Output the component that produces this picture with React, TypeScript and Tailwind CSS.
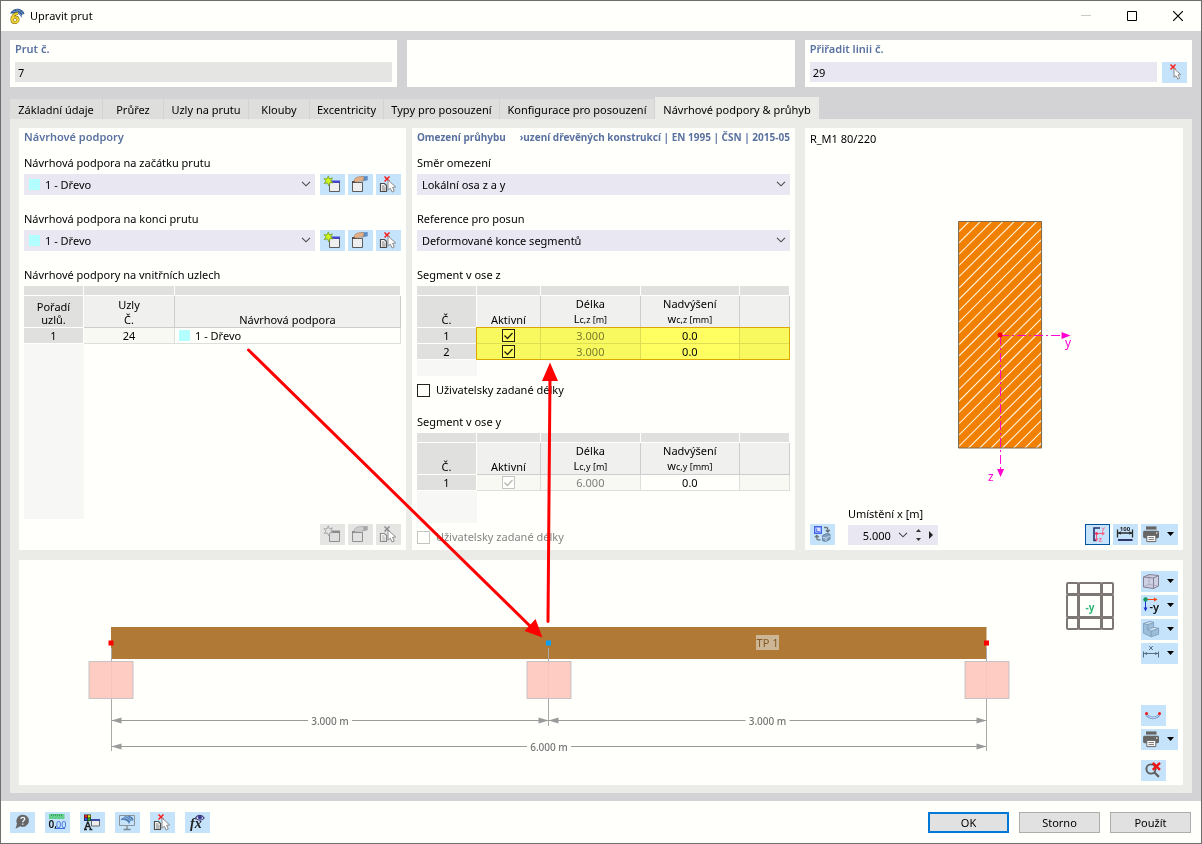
import { useState } from "react";
import type { ReactNode } from "react";
import clsx from "clsx";

const tabs = [
  { name: "Základní údaje", width: "w-[93px]" },
  { name: "Průřez", width: "w-[61px]" },
  { name: "Uzly na prutu", width: "w-[85px]" },
  { name: "Klouby", width: "w-[61px]" },
  { name: "Excentricity", width: "w-[74px]" },
  { name: "Typy pro posouzení", width: "w-[116px]" },
  { name: "Konfigurace pro posouzení", width: "w-[155px]" },
  { name: "Návrhové podpory & průhyb", width: "w-[164px]" },
];

/* ---------- icons, all drawn on the 25x21 button face ---------- */

const Face = ({ children }: { children: ReactNode }) => (
  <svg width="25" height="21" viewBox="0 0 25 21" fill="none" className="shrink-0">
    {children}
  </svg>
);

const Cursor = () => (
  <path d="M12 6v10.2l2.3-2 1.8 3.8 2.2-1-1.7-3.7 3.1-.3z" fill="#fff" stroke="#8b8b8b" />
);

const RedCross = () => <path d="M8.5 2.5l5 5m0-5l-5 5" stroke="#ff1e1e" strokeWidth="1.5" />;

const IconPick = () => (
  <Face>
    <RedCross />
    <path d="M12 6.5v8.8l2-1.6 1.8 3.5 1.9-.9-1.7-3.5 2.7-.3z" fill="#fff" stroke="#8b8b8b" />
  </Face>
);

const IconNew = ({ off }: { off?: boolean }) => (
  <Face>
    <path d="M9.5 7.5h10v10h-10z" fill={off ? "#dedede" : "#efefef"} stroke={off ? "#8f8f8f" : "#5c5c5c"} />
    <path d="M9 6.5h11v2.5H9z" fill={off ? "#8b8b8b" : "#4545c8"} />
    <path
      d="M8.3 1.8l1 3 3.2-.9-1.8 2.7 2.3 2.2-3.2-.1-1 3.1-1.4-3-3.2.8 1.9-2.6-2.2-2.2 3.2.1z"
      fill={off ? "#e6e6e6" : "#d6f51e"}
      stroke={off ? "#9b9b9b" : "#6da020"}
      strokeWidth=".8"
    />
  </Face>
);

const IconEdit = ({ off }: { off?: boolean }) => (
  <Face>
    <path d="M4.5 8.5h10v9h-10z" fill={off ? "#e2e2e2" : "#efefef"} stroke={off ? "#8f8f8f" : "#5c5c5c"} />
    <path d="M4 7h4v2H4z" fill={off ? "#8b8b8b" : "#4b4b4b"} />
    <path d="M13 2.6l6.7-.6v4.2l-5.8 1.4z" fill={off ? "#a6a6a6" : "#5c8dc6"} />
    <path
      d="M6 6c1.6-2.6 4-3.5 8-3.4l2 .6-.4 3-2.2 1.4-1.2-1-2.3 1.6-1.2-.8-1.6.8z"
      fill={off ? "#d0d0d0" : "#e2b088"}
      stroke={off ? "#9f9f9f" : "#a87a58"}
      strokeWidth=".6"
    />
  </Face>
);

const IconDelete = ({ off }: { off?: boolean }) => (
  <Face>
    <path d="M4.5 9.5h4l2 2v6h-6z" fill="#fff" stroke={off ? "#8b8b8b" : "#4d4d4d"} strokeWidth="1.2" />
    <path d="M6 12h2.5M6 14h3.5M6 16h3.5" stroke={off ? "#8b8b8b" : "#4d4d4d"} strokeWidth=".8" />
    {off ? <path d="M8.5 2.5l5 5m0-5l-5 5" stroke="#8b8b8b" strokeWidth="1.5" /> : <RedCross />}
    <Cursor />
  </Face>
);

const IconSwap = () => (
  <Face>
    <path d="M4.7 2.7h6.6v6.6H4.7z" fill="#dfe6ff" stroke="#4364e8" strokeWidth="1.4" />
    <path d="M6.7 4.5v3.2h3.2" stroke="#4364e8" />
    <path d="M14 3.5h2.2c1 0 1.6.6 1.6 1.6v2.2M15.8 6l2 2 2-2M6.8 11.5v2.8c0 1 .6 1.6 1.6 1.6h2M4.8 13.4l2-2 2 2" stroke="#6c7377" strokeWidth="1.3" />
    <path d="M12.5 11.5l4-2 3.5.6v5.2l-4 2.2-3.5-.7z" fill="#7f9dbd" stroke="#4f7092" strokeWidth=".7" />
    <path d="M12.5 13.5l3.5.5 4-2M16 14v3.3" stroke="#dbe8f4" strokeWidth=".8" />
  </Face>
);

const IconAxes = () => (
  <Face>
    <path d="M15 4H9v12.4h2" stroke="#25306a" strokeWidth="1.6" />
    <path d="M11.5 9.5h6M11.5 9.5v5.5" stroke="#ff5a80" />
    <path d="M17 7.6l3 1.9-3 1.9zM9.6 14.5l1.9 3.2 1.9-3.2z" fill="#ff5a80" />
    <path d="M17 3.5l1.3 2 1.3-2M18.3 5.5l-.8 2M14 14.5h2.6L14 17.2h2.8" stroke="#ff5a80" strokeWidth=".8" />
    <circle cx="11.5" cy="9.5" r="1.5" fill="#ff2f5c" />
  </Face>
);

const IconDimension = () => (
  <Face>
    <path d="M4.5 5.5v8M19.5 5.5v8M5 9h14" stroke="#2b2b2b" strokeWidth="1.3" />
    <path d="M5 9l2.8-1.7v3.4zM19 9l-2.8-1.7v3.4z" fill="#2b2b2b" />
    <path d="M5 15h14.5v2H5z" fill="#2f3568" />
    <text x="12" y="7" textAnchor="middle" fontSize="6" fontWeight="700" fill="#222">100</text>
  </Face>
);

const IconPrint = () => (
  <Face>
    <path d="M5 2.4h10.5v3.2H5z" fill="#666" />
    <path d="M3.5 6.8h13.1a1.4 1.4 0 0 1 1.4 1.4v4.6a1.4 1.4 0 0 1-1.4 1.4H3.5a1.4 1.4 0 0 1-1.4-1.4V8.2a1.4 1.4 0 0 1 1.4-1.4z" fill="#666" />
    <path d="M5.8 11.4h9v6.2h-9z" fill="#fff" stroke="#666" />
    <path d="M7.5 13.6H13M7.5 15.6H13" stroke="#666" strokeWidth=".9" />
    <circle cx="15.8" cy="9" r=".8" fill="#fff" />
  </Face>
);

const IconCube = () => (
  <Face>
    <path d="M2.5 6l5.5-2.5 9.5 1v10.5l-5 2.5-10-1.5z" fill="#cdd0e4" />
    <path d="M2.5 6l5.5-2.5 9.5 1-5 2.5zM2.5 6v10l10 1.5V7M17.5 4.5V15l-5 2.5" stroke="#857f93" />
    <path d="M8 3.5v10L2.5 16M8 13.5l9.5 1.5" stroke="#a39eb4" strokeWidth=".7" />
  </Face>
);

const IconMinusY = () => (
  <Face>
    <path d="M5 4.5h9" stroke="#ff4310" />
    <path d="M13 2.5l3.5 2-3.5 2z" fill="#ff4310" />
    <path d="M4.5 5v8" stroke="#1f35d8" />
    <path d="M2.5 12.5h4l-2 4z" fill="#1f35d8" />
    <circle cx="4.5" cy="4.5" r="2.2" fill="#129c62" />
    <text x="8.5" y="16" fontSize="11" fontWeight="600" fill="#111">-y</text>
  </Face>
);

const IconSolid = () => (
  <Face>
    <path d="M2.5 4.5l6.5-2.2 3.6 1v5l5 1v6l-7.4 2.5-7.7-3.6z" fill="#9dbedb" />
    <path d="M2.5 4.5l6.5-2.2 3.6 1-5.8 2.3zM6.8 10.8l5.8-2.5 5 1-7.4 2.7z" fill="#cfe3f3" />
    <path d="M2.5 4.5l6.5-2.2 3.6 1-5.8 2.3zM6.8 5.6v5.2l5.8-2.5v-5M6.8 10.8l3.4 1.2 7.4-2.7-5-1M10.2 12v5.8l7.4-2.5v-6M2.5 4.5v9.7l7.7 3.6" stroke="#7292b0" strokeWidth=".7" />
  </Face>
);

const IconMeasure = () => (
  <Face>
    <path d="M2.5 8.5v6M17.5 8.5v6M3 10.5h14" stroke="#566c80" />
    <path d="M3 10.5l3-1.6v3.2zM17 10.5l-3-1.6v3.2z" fill="#566c80" />
    <path d="M8.2 3l3.6 4m0-4L8.2 7" stroke="#566c80" />
  </Face>
);

const IconDeform = () => (
  <Face>
    <path d="M5.5 9c2.5 5.2 10.5 5.2 13 0" stroke="#7d9ccc" strokeWidth="2.6" />
    <path d="M5.5 9c2.5 5.2 10.5 5.2 13 0" stroke="#c9dcf4" strokeWidth=".9" />
    <circle cx="5.5" cy="8.6" r="1.5" fill="#f01818" />
    <circle cx="18.5" cy="8.6" r="1.5" fill="#f01818" />
  </Face>
);

const IconZoomReset = () => (
  <Face>
    <circle cx="10" cy="9" r="4.6" stroke="#5f5f5f" strokeWidth="1.9" />
    <path d="M13.3 12.3l4.6 4.6" stroke="#5f5f5f" strokeWidth="2.2" />
    <path d="M11.8 2.8l7.2 7m0-7l-7.2 7" stroke="#ee1616" strokeWidth="2.4" />
  </Face>
);

const IconHelp = () => (
  <Face>
    <path d="M12.8 2.8a6.3 6 0 1 1-2.6 11.5L5.5 16.8l1.5-5a6.3 6.3 0 0 1 5.8-9z" fill="#666" />
    <path d="M10.9 6.9c.2-2.2 4-2 3.8.2 0 1.3-2 1.5-2 3.2M12.7 11.5v1.3" stroke="#e9f4ff" strokeWidth="1.4" />
  </Face>
);

const IconUnits = () => (
  <Face>
    <path d="M4 2h15.5v5H4z" fill="#63cf8c" />
    <path d="M6.5 2v2M8.5 2v2M10.5 2v2M12.5 2v2M14.5 2v2M16.5 2v2" stroke="#2c9a58" strokeWidth=".8" />
    <text x="3.5" y="15.5" fontSize="10" fontWeight="600" fill="#111">0,</text>
    <text x="11" y="15.5" fontSize="9" fill="#3d6be0">00</text>
    <path d="M10.5 16.5H20" stroke="#3d6be0" />
  </Face>
);

const IconDisplay = () => (
  <Face>
    <path d="M4 2.5h7v6.5H4z" fill="#222" />
    <path d="M4.6 3.2h2.6v2.3H4.6z" fill="#ff2626" />
    <path d="M7.9 3.2h2.5v2.3H7.9z" fill="#e3e31a" />
    <path d="M4.6 6.1h2.6v2.3H4.6z" fill="#3a52f0" />
    <path d="M7.9 6.1h2.5v2.3H7.9z" fill="#21b330" />
    <path d="M7.8 9.5l-3 8M7.8 9.5l3 8M6 14.5h3.8M4 17.5h3M9.3 17.5h3" stroke="#222" strokeWidth="1.3" />
    <path d="M11.5 7.5h8v6.5h-8z" fill="#ececec" stroke="#6a6a6a" />
    <path d="M11 7h9v2h-9z" fill="#3e4ba6" />
  </Face>
);

const IconScreen = () => (
  <Face>
    <path d="M4.5 3.5h15v10h-15z" stroke="#8b9398" />
    <path d="M5.5 8.3c2-3.5 5.5-5 8.5-4.5 3 .5 4.5 2.5 4.5 4.7l-3 .3-1.5 3.5c-.5-3-3.5-5-8.5-4z" fill="#4f7db8" />
    <path d="M8 6c3-.5 6 1 7 3M11 4.5c3 .5 5 2 5.5 4" stroke="#b9d2ee" strokeWidth=".7" />
    <path d="M12 14v3M8.5 17.5h7" stroke="#7b858c" strokeWidth="1.3" />
  </Face>
);

const IconFormula = () => (
  <Face>
    <text x="5" y="15.5" fontSize="14" fontStyle="italic" fontWeight="700" fill="#222" className="font-['Liberation_Serif',serif]">fx</text>
    <path d="M10.5 6c2-3.5 6.5-3.5 8.7 0-2.2 3-6.7 3-8.7 0z" fill="#dfe1fb" stroke="#36366e" strokeWidth="1.1" />
    <circle cx="14.9" cy="5.6" r="2" fill="#3a3a92" />
  </Face>
);

const Chevron = ({ className }: { className?: string }) => (
  <svg width="10" height="6" viewBox="0 0 10 6" fill="none" className={className}>
    <path d="M1 .8l4 4 4-4" stroke="#4a4a4a" strokeWidth="1.1" />
  </svg>
);

/* ---------- controls ---------- */

type IconButtonProps = {
  label: string;
  children: ReactNode;
  menu?: boolean;
  disabled?: boolean;
  pressed?: boolean;
};

const IconButton = ({ label, children, menu, disabled, pressed }: IconButtonProps) => (
  <button
    type="button"
    aria-label={label}
    disabled={disabled}
    className={clsx(
      "flex h-[21px] shrink-0 items-center",
      menu ? "w-[37px]" : "w-[25px]",
      disabled ? "bg-[#e5e5e4]" : "bg-[#c5e3fa]",
      pressed && "outline outline-1 -outline-offset-1 outline-[#0054a0]"
    )}
  >
    {children}
    {menu && (
      <svg width="7" height="4" viewBox="0 0 7 4" className="mb-px ml-px">
        <path d="M0 0h7L3.5 4z" fill="#000" />
      </svg>
    )}
  </button>
);

type SelectProps = { id: string; label: string; value: string; swatch?: boolean; actions?: boolean };

const SelectField = ({ id, label, value, swatch, actions }: SelectProps) => (
  <>
    <label htmlFor={id} className="mb-[3px] block h-4 leading-4">{label}</label>
    <div className="mb-4 flex gap-[3px]">
      <div className={clsx("relative min-w-0 flex-1", actions && "mr-0.5")}>
        <select
          id={id}
          className={clsx("block h-[21px] w-full appearance-none bg-[#e8e7f2] pt-0.5", swatch ? "pl-[21px]" : "pl-[5px]")}
        >
          <option>{value}</option>
        </select>
        {swatch && <span className="pointer-events-none absolute top-[5px] left-[5px] size-[11px] bg-[#b3ffff]" />}
        <Chevron className="pointer-events-none absolute top-[7px] right-1" />
      </div>
      {actions && (
        <>
          <IconButton label="Nový"><IconNew /></IconButton>
          <IconButton label="Upravit"><IconEdit /></IconButton>
          <IconButton label="Odstranit"><IconDelete /></IconButton>
        </>
      )}
    </div>
  </>
);

type CheckProps = { id?: string; label?: string; initial?: boolean; disabled?: boolean };

const Check = ({ id, label, initial = false, disabled }: CheckProps) => {
  const [checked, setChecked] = useState(initial);
  return (
    <span className="relative block size-[13px] shrink-0">
      <input
        id={id}
        type="checkbox"
        aria-label={label}
        checked={checked}
        disabled={disabled}
        onChange={(e) => setChecked(e.target.checked)}
        className="block size-[13px] appearance-none border border-[#222] bg-[#fffffc] disabled:border-[#c4c4c4]"
      />
      {checked && (
        <svg viewBox="0 0 13 13" fill="none" className="pointer-events-none absolute inset-0">
          <path d="M2.5 6.5l3 3 5-5.5" stroke={disabled ? "#b5b5b5" : "#222"} strokeWidth="1.3" />
        </svg>
      )}
    </span>
  );
};

/* ---------- tables ---------- */

const strip = "h-2.5 border-r border-b border-[#fffffc] bg-[#e0e0df] p-0";
const headFirst = "h-8 border-r border-b border-[#fffffc] bg-[#e0e0df] p-0 pb-px align-bottom font-normal leading-[13px]";
const head = "h-8 border-r border-b border-[#cdcdcd] bg-[#f0f0ef] p-0 align-bottom font-normal leading-[15px]";
const rowHead = "h-4 border-r border-b border-[#fffffc] bg-[#e0e0df] p-0 font-normal leading-[15px]";
const cell = "h-4 border-r border-b border-[#dededc] p-0 text-center leading-[15px]";

type SegmentTableProps = { axis: string; lengths: string[]; disabled?: boolean; marked?: boolean };

const SegmentTable = ({ axis, lengths, disabled, marked }: SegmentTableProps) => (
  <div className="relative">
    <table className="w-full table-fixed border-separate border-spacing-0">
      <colgroup>
        <col className="w-[60px]" />
        <col className="w-16" />
        <col className="w-[100px]" />
        <col className="w-[99px]" />
        <col />
      </colgroup>
      <thead>
        <tr>
          {[0, 1, 2, 3, 4].map((i) => <td key={i} className={strip} />)}
        </tr>
        <tr>
          <th className={headFirst}>Č.</th>
          <th className={head}>Aktivní</th>
          <th className={head}>
            Délka<br />L<span className="text-[9px]">c,{axis} [m]</span>
          </th>
          <th className={head}>
            Nadvýšení<br />w<span className="text-[9px]">c,{axis} [mm]</span>
          </th>
          <th className={head} />
        </tr>
      </thead>
      <tbody>
        {lengths.map((length, i) => (
          <tr key={i}>
            <th className={rowHead}>{i + 1}</th>
            <td className={clsx(cell, "bg-[#f8f9f3]")}>
              <div className="flex justify-center">
                <Check label={`Aktivní ${i + 1}`} initial disabled={disabled} />
              </div>
            </td>
            <td className={clsx(cell, "bg-[#f8f9f3] text-[#7d7d7d]")}>{length}</td>
            <td className={clsx(cell, "bg-[#fffffc]")}>0.0</td>
            <td className={clsx(cell, "bg-[#f8f9f3]")} />
          </tr>
        ))}
      </tbody>
    </table>
    {marked && (
      <>
        <div className="pointer-events-none absolute top-[41px] right-0 bottom-0 left-[59px] bg-[#ffff62] mix-blend-multiply" />
        <div className="pointer-events-none absolute top-[41px] right-0 bottom-0 left-[59px] border border-[#dca800]" />
      </>
    )}
  </div>
);

const SupportTable = () => (
  <table className="w-full table-fixed border-separate border-spacing-0">
    <colgroup>
      <col className="w-[60px]" />
      <col className="w-[91px]" />
      <col />
    </colgroup>
    <thead>
      <tr>
        {[0, 1, 2].map((i) => <td key={i} className={strip} />)}
      </tr>
      <tr>
        <th className={headFirst}>Pořadí<br />uzlů.</th>
        <th className={head}>Uzly<br />Č.</th>
        <th className={head}>Návrhová podpora</th>
      </tr>
    </thead>
    <tbody>
      <tr>
        <th className={rowHead}>1</th>
        <td className={clsx(cell, "bg-[#f8f9f3]")}>24</td>
        <td className={cell}>
          <span className="flex items-center gap-[5px] pl-1">
            <span className="size-[11px] bg-[#b3ffff]" />1 - Dřevo
          </span>
        </td>
      </tr>
    </tbody>
  </table>
);

/* ---------- drawings ---------- */

const CrossSection = () => (
  <svg viewBox="904 168 180 320" className="h-80 w-full" fill="none">
    <clipPath id="section">
      <path d="M959 222h82v226h-82z" />
    </clipPath>
    <path d="M958.5 221.5h83v226.5h-83z" fill="#f28000" />
    <g clipPath="url(#section)" stroke="#fff3dc" strokeWidth="1.1">
      {Array.from({ length: 28 }, (_, i) => (
        <path key={i} d={`M959 ${231.5 + i * 11.3}l84 -84`} />
      ))}
    </g>
    <path d="M958.5 221.5h83v226.5h-83z" stroke="#7b6a55" />
    <path d="M1000 335.5h62M1000.5 336v134" stroke="#ff00d0" strokeDasharray="9 3 2 3" />
    <path d="M1061.5 332l9 3.5-9 3.5zM997 469h7l-3.5 8z" fill="#ff00d0" />
    <circle cx="1000" cy="335" r="2.5" fill="#ff0000" />
    <text x="1065" y="347" fontSize="12" fill="#ff00d0">y</text>
    <text x="988" y="481" fontSize="12" fill="#ff00d0">z</text>
  </svg>
);

const Dimension = ({ from, to, y, text }: { from: number; to: number; y: number; text: string }) => {
  const mid = (from + to) / 2;
  return (
    <g>
      <path d={`M${from} ${y}H${mid - 22}M${mid + 22} ${y}H${to}`} stroke="#9a9a9a" />
      <path d={`M${from} ${y}l10 -3v6zM${to} ${y}l-10 -3v6z`} fill="#9a9a9a" />
      <text x={mid} y={y + 4} textAnchor="middle" fontSize="10" fontWeight="500" fill="#757575">{text}</text>
    </g>
  );
};

const BeamView = () => (
  <svg viewBox="0 0 1032 225" className="min-w-0 flex-1">
    <path d="M92 67h875.5v32H92z" fill="#b07a36" />
    <path d="M92.5 88v103M529.5 88v78M967.5 88v103" stroke="#a9a9a9" />
    {[70, 508, 946].map((x) => (
      <rect key={x} x={x} y="101.5" width="44" height="37" fill="#ffc8bf" fillOpacity=".92" stroke="#c4c4c4" />
    ))}
    <path d="M89.5 80.5h5v5h-5zM965 80.5h5v5h-5z" fill="#ff0000" />
    <path d="M527 80.5h5v5h-5z" fill="#0aa0f5" />
    <rect x="737" y="75" width="23" height="15" fill="#cdb696" />
    <text x="748.5" y="87" textAnchor="middle" fontSize="11" fill="#855a25">TP 1</text>
    <Dimension from={92.5} to={529.5} y={160.5} text="3.000 m" />
    <Dimension from={529.5} to={967.5} y={160.5} text="3.000 m" />
    <Dimension from={92.5} to={967.5} y={186.5} text="6.000 m" />
  </svg>
);

const cubeBands = [
  [1, 11],
  [13, 22],
  [36, 11],
];

const ViewCube = () => (
  <svg width="48" height="48" viewBox="0 0 48 48" fill="#fffffc" stroke="#7d7774" strokeWidth="2">
    {cubeBands.map(([y, h]) =>
      cubeBands.map(([x, w]) => (
        <rect key={`${x}-${y}`} x={x} y={y} width={w} height={h} rx="1" />
      ))
    )}
    <text x="24" y="29" textAnchor="middle" fontSize="10" fontWeight="700" fill="#2bb673" stroke="none">-y</text>
  </svg>
);

const Arrows = () => (
  <svg width="1202" height="844" viewBox="0 0 1202 844" className="pointer-events-none absolute -top-px -left-px">
    <path d="M248.5 350L532 628M548 621.5L550 376" stroke="#ff0000" strokeWidth="3" strokeLinecap="round" />
    <path d="M542.5 637.5l-18-6.5 11-12zM550 362.5l-8 18.5h16z" fill="#ff0000" />
  </svg>
);

const AppIcon = () => (
  <svg width="16" height="16" viewBox="0 0 16 16">
    <path d="M1 5.5C3 1.5 7 0 10.5 1c2.5.7 4.5 2.5 5 5l-2.5.5-.5 3.5c-1-3.5-4-5.5-8-4.5z" fill="#365f95" />
    <path d="M4 3.5c4-.5 7 1.5 8.5 4.5M7 1.8c3.5.2 6 2 7 4.5" stroke="#8fb1d8" strokeWidth=".7" fill="none" />
    <path d="M9 5.5C5.5 5.5 3 8 3 11.5 3 13.5 4 14.5 5.8 14.5S9 13.3 9 11.7c0-3-4.5-3-5.5-.7" stroke="#6b5c10" strokeWidth="3" fill="none" />
    <path d="M9 5.5C5.5 5.5 3 8 3 11.5 3 13.5 4 14.5 5.8 14.5S9 13.3 9 11.7c0-3-4.5-3-5.5-.7" stroke="#f1d22c" strokeWidth="2" fill="none" />
  </svg>
);

/* ---------- dialog ---------- */

const dialogButton = "h-[21px] w-[81px] bg-[#e1e1e1]";
const heading = "mb-2 flex h-[19px] items-center whitespace-nowrap text-[#5a72a0]";

const App = () => {
  const [activeTab, setActiveTab] = useState(7);

  return (
    <div className="relative flex min-h-screen flex-col overflow-hidden border border-[#6e6e6e] bg-[#d3d3d5] font-['Noto_Sans','Open_Sans',sans-serif] text-[11px] text-black">
      <header className="flex h-[30px] items-center bg-[#fffffc] pl-2">
        <AppIcon />
        <h1 className="ml-[5px] flex-1">Upravit prut</h1>
        <button type="button" aria-label="Minimalizovat" className="flex h-full w-[46px] items-center justify-center">
          <svg width="10" height="10"><path d="M0 4.5h10" stroke="#c9c9c5" /></svg>
        </button>
        <button type="button" aria-label="Maximalizovat" className="flex h-full w-[46px] items-center justify-center">
          <svg width="10" height="10"><path d="M.5.5h9v9h-9z" fill="none" stroke="#000" /></svg>
        </button>
        <button type="button" aria-label="Zavřít" className="flex h-full w-[46px] items-center justify-center">
          <svg width="10" height="10"><path d="M0 0l10 10M10 0L0 10" stroke="#000" strokeWidth="1.2" /></svg>
        </button>
      </header>

      <main className="flex flex-1 flex-col px-[9px] pt-[9px] pb-2">
        <div className="grid grid-cols-3 gap-2.5">
          <section className="bg-[#fffffc] px-[5px] pb-[5px]">
            <label htmlFor="member" className="flex h-[22px] items-center pb-1 font-semibold text-[#5a72a0]">Prut č.</label>
            <input id="member" readOnly defaultValue="7" className="block h-5 w-full bg-[#e5e5e4] px-[3px] pt-px" />
          </section>
          <section className="bg-[#fffffc]" />
          <section className="bg-[#fffffc] px-[5px]">
            <label htmlFor="line" className="flex h-[22px] items-center pb-1 font-semibold text-[#5a72a0]">Přiřadit linii č.</label>
            <div className="flex gap-[5px]">
              <input id="line" defaultValue="29" className="block h-5 min-w-0 flex-1 bg-[#e8e7f2] px-[3px] pt-px" />
              <IconButton label="Vybrat linii"><IconPick /></IconButton>
            </div>
          </section>
        </div>

        <div role="tablist" className="mt-2.5 flex h-[22px] items-end">
          {tabs.map((tab, i) => (
            <button
              key={tab.name}
              type="button"
              role="tab"
              aria-selected={i === activeTab}
              onClick={() => setActiveTab(i)}
              className={clsx(
                "text-center whitespace-nowrap",
                tab.width,
                i === activeTab ? "h-[22px] bg-[#ebece8] pt-1" : "h-5 border-r border-[#d3d3d5] bg-[#dededc] pt-0.5"
              )}
            >
              {tab.name}
            </button>
          ))}
        </div>

        <div className="flex flex-1 flex-col gap-2.5 bg-[#ebece8] px-[9px] pt-[9px] pb-2">
          <div className="flex">
            <section className="mr-1.5 flex min-w-0 flex-[387] flex-col bg-[#fffffc] px-[5px] pb-[5px]">
              <h2 className={clsx(heading, "font-semibold")}>Návrhové podpory</h2>
              <SelectField id="start" label="Návrhová podpora na začátku prutu" value="1 - Dřevo" swatch actions />
              <SelectField id="end" label="Návrhová podpora na konci prutu" value="1 - Dřevo" swatch actions />
              <h3 className="mb-[3px] h-4 leading-4">Návrhové podpory na vnitřních uzlech</h3>
              <SupportTable />
              <div className="mb-[5px] w-[60px] flex-1 bg-[#f7f7f5]" />
              <div className="flex justify-end gap-[3px]">
                <IconButton label="Nový" disabled><IconNew off /></IconButton>
                <IconButton label="Upravit" disabled><IconEdit off /></IconButton>
                <IconButton label="Odstranit" disabled><IconDelete off /></IconButton>
              </div>
            </section>

            <section className="mr-2.5 min-w-0 flex-[383] bg-[#fffffc] px-[5px] pb-[5px]">
              <h2 className={clsx(heading, "justify-between text-[10px] font-bold")}>
                <span>Omezení průhybu</span>
                <span>›uzení dřevěných konstrukcí | EN 1995 | ČSN | 2015-05</span>
              </h2>
              <SelectField id="direction" label="Směr omezení" value="Lokální osa z a y" />
              <SelectField id="reference" label="Reference pro posun" value="Deformované konce segmentů" />
              <h3 className="mb-[3px] h-4 leading-4">Segment v ose z</h3>
              <SegmentTable axis="z" lengths={["3.000", "3.000"]} marked />
              <div className="h-4 w-[60px] bg-[#f7f7f5]" />
              <div className="mt-1.5 flex h-4 items-center gap-1.5">
                <Check id="lengths-z" />
                <label htmlFor="lengths-z">Uživatelsky zadané délky</label>
              </div>
              <h3 className="mt-4 mb-[3px] h-4 leading-4">Segment v ose y</h3>
              <SegmentTable axis="y" lengths={["6.000"]} disabled />
              <div className="h-8 w-[60px] bg-[#f7f7f5]" />
              <div className="mt-1.5 flex h-4 items-center gap-1.5">
                <Check id="lengths-y" disabled />
                <label htmlFor="lengths-y" className="text-[#858585]">Uživatelsky zadané délky</label>
              </div>
            </section>

            <section className="flex min-w-0 flex-[378] flex-col bg-[#fffffc] px-[5px] pb-[5px]">
              <p className="h-[22px] leading-[22px]">R_M1 80/220</p>
              <div className="flex flex-1 items-center justify-center">
                <CrossSection />
              </div>
              <div className="flex items-end">
                <IconButton label="Přepnout zobrazení"><IconSwap /></IconButton>
                <div className="ml-[13px]">
                  <label htmlFor="position" className="mb-[3px] block h-4 leading-4">Umístění x [m]</label>
                  <div className="flex h-5 w-[90px] items-center bg-[#e8e7f2]">
                    <input id="position" defaultValue="5.000" className="h-5 w-[43px] pt-px text-right" />
                    <button type="button" aria-label="Seznam poloh" className="ml-[7px]"><Chevron /></button>
                    <div className="ml-2 flex flex-col gap-1.5">
                      <button type="button" aria-label="Zvýšit"><svg width="5" height="3" className="block"><path d="M0 3h5L2.5 0z" fill="#333" /></svg></button>
                      <button type="button" aria-label="Snížit"><svg width="5" height="3" className="block"><path d="M0 0h5L2.5 3z" fill="#333" /></svg></button>
                    </div>
                    <button type="button" aria-label="Další poloha" className="ml-2"><svg width="4" height="8" className="block"><path d="M0 0v8l4-4z" fill="#222" /></svg></button>
                  </div>
                </div>
                <div className="ml-auto flex gap-[3px]">
                  <IconButton label="Osy průřezu" pressed><IconAxes /></IconButton>
                  <IconButton label="Kóty"><IconDimension /></IconButton>
                  <IconButton label="Tisk" menu><IconPrint /></IconButton>
                </div>
              </div>
            </section>
          </div>

          <section className="flex min-h-[225px] flex-1 bg-[#fffffc] pr-[5px]">
            <BeamView />
            <div className="mt-[22px] mr-[27px] ml-[15px]">
              <ViewCube />
            </div>
            <div className="flex w-[37px] flex-col gap-[3px] pt-[11px] pb-1">
              <IconButton label="Zobrazení modelu" menu><IconCube /></IconButton>
              <IconButton label="Směr pohledu" menu><IconMinusY /></IconButton>
              <IconButton label="Tělesa" menu><IconSolid /></IconButton>
              <IconButton label="Rozměry" menu><IconMeasure /></IconButton>
              <div className="mt-auto" />
              <IconButton label="Deformace"><IconDeform /></IconButton>
              <IconButton label="Tisk" menu><IconPrint /></IconButton>
              <div className="mt-[7px]">
                <IconButton label="Zrušit zvětšení"><IconZoomReset /></IconButton>
              </div>
            </div>
          </section>
        </div>
      </main>

      <footer className="flex h-[42px] items-center gap-2.5 bg-[#fffffc] pr-2.5 pl-[9px]">
        <IconButton label="Nápověda"><IconHelp /></IconButton>
        <IconButton label="Jednotky"><IconUnits /></IconButton>
        <IconButton label="Nastavení zobrazení"><IconDisplay /></IconButton>
        <IconButton label="Obrazovka"><IconScreen /></IconButton>
        <IconButton label="Odstranit"><IconDelete /></IconButton>
        <IconButton label="Vzorec"><IconFormula /></IconButton>
        <div className="flex-1" />
        <button type="button" className={clsx(dialogButton, "border-2 border-[#0078d7] leading-[18px]")}>OK</button>
        <button type="button" className={clsx(dialogButton, "border border-[#adadad] leading-5")}>Storno</button>
        <button type="button" className={clsx(dialogButton, "border border-[#adadad] leading-5")}>Použít</button>
      </footer>

      <Arrows />
    </div>
  );
};

export default App;
